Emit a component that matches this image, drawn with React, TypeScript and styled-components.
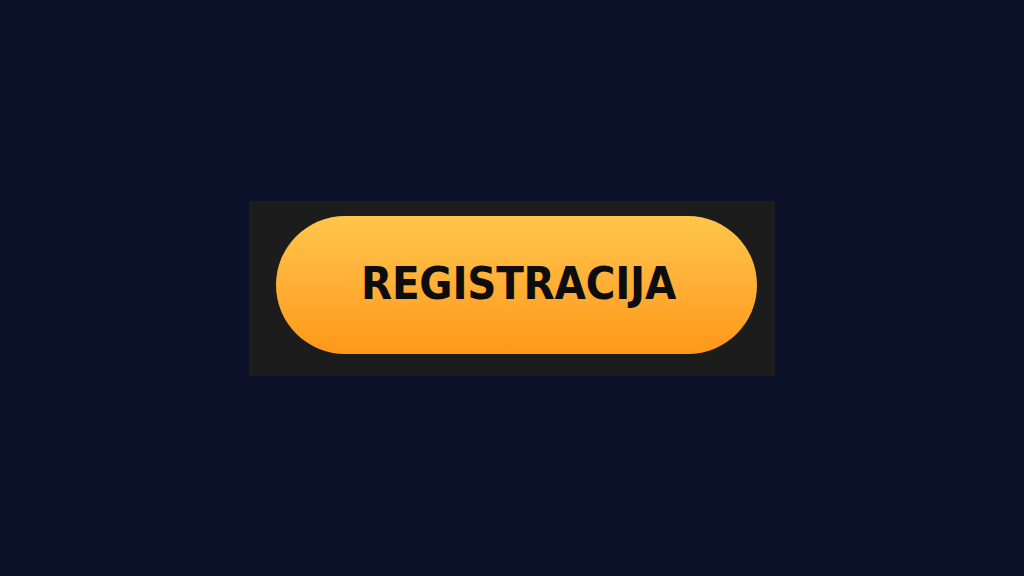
import React from "react";
import styled, { createGlobalStyle } from "styled-components";

const Global = createGlobalStyle`
  html, body { margin: 0; padding: 0; }
  body { background: #0a1129; }
`;

const Page = styled.div`
  width: 1024px;
  height: 576px;
  display: flex;
  align-items: center;
  justify-content: center;
`;

const Panel = styled.div`
  background: #1c1c1c;
  padding: 15px 18px 22px 27px;
  display: flex;
`;

const Button = styled.button`
  width: 481px;
  height: 138px;
  border: none;
  border-radius: 69px;
  background: linear-gradient(180deg, #ffc64b 0%, #ffaf36 50%, #ff9817 100%);
  color: #0d0d0d;
  font-family: "DejaVu Sans Condensed", "DejaVu Sans", sans-serif;
  font-weight: 700;
  font-size: 45px;
  letter-spacing: -0.2px;
  line-height: 1;
  display: flex;
  align-items: center;
  justify-content: center;
  padding: 0 0 3px 4px;
  cursor: pointer;
`;

export default function App() {
  return (
    <>
      <Global />
      <Page>
        <Panel>
          <Button>REGISTRACIJA</Button>
        </Panel>
      </Page>
    </>
  );
}
